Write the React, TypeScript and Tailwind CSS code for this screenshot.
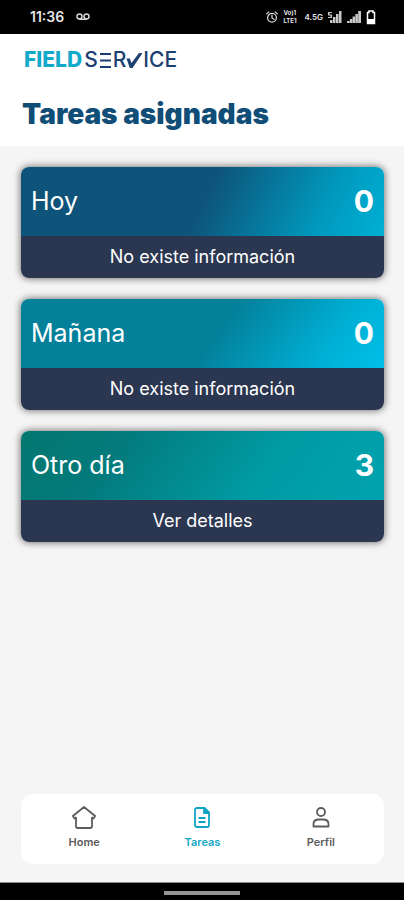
import { useState } from "react";
import type { ReactNode } from "react";
import clsx from "clsx";

interface TaskGroup {
  title: string;
  count: number;
  action: string;
  gradient: string;
}

const groups: TaskGroup[] = [
  {
    title: "Hoy",
    count: 0,
    action: "No existe información",
    gradient:
      "bg-[linear-gradient(115deg,#0e5379_0%,#0e5379_50%,#0099bd_82%,#00b0d4_100%)]",
  },
  {
    title: "Mañana",
    count: 0,
    action: "No existe información",
    gradient:
      "bg-[linear-gradient(125deg,#03819b_0%,#03819b_54%,#00aed3_82%,#00bfe8_100%)]",
  },
  {
    title: "Otro día",
    count: 3,
    action: "Ver detalles",
    gradient:
      "bg-[linear-gradient(125deg,#03776f_0%,#037a7c_26%,#009ba3_66%,#00a3b0_100%)]",
  },
];

function SignalBars({ small = false }: { small?: boolean }) {
  return (
    <svg viewBox="0 0 14 12" className="h-3 w-3.5" fill="#c8c8c8" aria-hidden="true">
      {small ? (
        <path d="M0 1h4v1H1.500v1.500H4V7H0V6h2.500V4.500H0zM2 9h2.500v3H2zM5 6h2.500v6H5zM8 3h2.500v9H8zM11 0h2.500v12H11z" />
      ) : (
        <path d="M0 10h2.500v2H0zM2.800 8h2.500v4H2.800zM5.600 5.500h2.500V12H5.600zM8.400 3h2.500v9H8.400zM11.200 0H14v12h-2.800z" />
      )}
    </svg>
  );
}

function StatusBar() {
  return (
    <div className="flex h-[34px] shrink-0 items-center justify-between bg-black pr-7 pl-[30px] text-[#e5e5e5]">
      <div className="flex items-center gap-3">
        <span className="text-sm font-semibold">11:36</span>
        <svg
          viewBox="0 0 14 8"
          className="h-2 w-3.5"
          fill="none"
          stroke="#d4d4d4"
          strokeWidth="1.5"
          aria-hidden="true"
        >
          <circle cx="3.5" cy="3.5" r="2.5" />
          <circle cx="10.5" cy="3.5" r="2.5" />
          <path d="M3 6.3h8" />
        </svg>
      </div>
      <div className="flex items-center gap-[5px]">
        <svg
          viewBox="0 0 12 12"
          className="h-3 w-3"
          fill="none"
          stroke="#d4d4d4"
          strokeWidth="1.3"
          strokeLinecap="round"
          aria-hidden="true"
        >
          <circle cx="6" cy="6.8" r="4.4" />
          <path d="M6 4.2v2.8l2 1.3M.8 2.8l2-1.9M11.2 2.8l-2-1.9" />
        </svg>
        <span className="flex w-4 flex-col text-[6px] leading-[8px] font-bold">
          <span>Vo)1</span>
          <span>LTE1</span>
        </span>
        <span className="text-[8px] font-semibold">4.5G</span>
        <SignalBars small />
        <SignalBars />
        <svg viewBox="0 0 10 15" className="h-[15px] w-2.5" aria-hidden="true">
          <path
            d="M3 2.5V1h4v1.5h1.5v11h-7v-11z"
            fill="none"
            stroke="#fff"
            strokeWidth="1.5"
          />
          <path d="M2 9h6v5H2z" fill="#fff" />
        </svg>
      </div>
    </div>
  );
}

function Logo() {
  return (
    <div
      className="flex h-5 items-center text-[21px] leading-5 font-medium text-[#1c3f72]"
      aria-label="Fieldservice"
    >
      <span className="mr-0.5 font-extrabold text-[#12a9cb]">FIELD</span>
      <span>S</span>
      <svg viewBox="0 0 13 15" className="mx-px h-[15px] w-[13px]" aria-hidden="true">
        <path d="M1 1h11M1 7.500h11M1 14h11" stroke="currentColor" strokeWidth="2" />
      </svg>
      <span>R</span>
      <svg viewBox="0 0 17 15" className="h-[15px] w-[17px]" aria-hidden="true">
        <path d="M.5 5.500h3.300l1.700 4.500L13 0h3.500L6.500 15H3.800z" fill="currentColor" />
      </svg>
      <span>ICE</span>
    </div>
  );
}

function TaskCard({ title, count, action, gradient }: TaskGroup) {
  return (
    <article className="overflow-hidden rounded-lg text-white shadow-[0_0_7px_1px_rgba(0,0,0,0.5)]">
      <div className={clsx("flex h-[69px] items-center justify-between px-2.5", gradient)}>
        <h2 className="text-[25px]">{title}</h2>
        <span className="text-[30px] font-bold">{count}</span>
      </div>
      <button
        type="button"
        className="flex h-[42px] w-full items-center justify-center bg-[#2b3650] text-lg"
      >
        {action}
      </button>
    </article>
  );
}

const tabs: { id: string; label: string; icon: ReactNode }[] = [
  {
    id: "home",
    label: "Home",
    icon: <path d="M12 1L.9 10l1.600 2.600L4 11.600V20q0 2 2 2h12q2 0 2-2v-8.400l1.500 1L23.100 10z" />,
  },
  {
    id: "tareas",
    label: "Tareas",
    icon: (
      <>
        <path d="M7 2h7.500L19 6.500V19q0 2-2 2H7q-2 0-2-2V4q0-2 2-2z" />
        <path d="M14 2v5h5z" fill="currentColor" />
        <path d="M8.500 12h7M8.500 16h7" />
      </>
    ),
  },
  {
    id: "perfil",
    label: "Perfil",
    icon: (
      <>
        <circle cx="12" cy="6" r="4" />
        <path d="M4.500 20.500v-2.500q0-4.500 5.500-4.500h4q5.500 0 5.500 4.500v2.500z" />
      </>
    ),
  },
];

function BottomNav() {
  const [active, setActive] = useState("tareas");

  return (
    <nav className="mr-5 mb-[18px] ml-[21px] flex h-[70px] rounded-xl bg-white px-1">
      {tabs.map((tab) => (
        <button
          key={tab.id}
          type="button"
          onClick={() => setActive(tab.id)}
          className={clsx(
            "flex flex-1 flex-col items-center gap-1 pt-3 text-[11px] leading-4 font-semibold",
            active === tab.id ? "text-[#12a5c3]" : "text-[#5c5c5c]"
          )}
        >
          <svg
            viewBox="0 0 24 24"
            className="h-6 w-6"
            fill="none"
            stroke="currentColor"
            strokeWidth="1.8"
            strokeLinejoin="round"
            aria-hidden="true"
          >
            {tab.icon}
          </svg>
          {tab.label}
        </button>
      ))}
    </nav>
  );
}

export default function App() {
  return (
    <div className="flex min-h-screen flex-col bg-[#f5f5f5] font-['Inter',sans-serif]">
      <StatusBar />

      <header className="bg-white px-[22px] pt-4 pb-3">
        <div className="px-0.5">
          <Logo />
        </div>
        <h1 className="mt-6 text-[28px] leading-10 font-black text-[#104d77]">
          Tareas asignadas
        </h1>
      </header>

      <main className="flex flex-1 flex-col gap-[21px] pt-[21px] pr-5 pb-6 pl-[21px]">
        {groups.map((group) => (
          <TaskCard key={group.title} {...group} />
        ))}
      </main>

      <BottomNav />

      {/* Gesture bar */}
      <div className="flex h-[18px] shrink-0 items-center justify-center border-t border-[#8a8a8a] bg-black">
        <div className="mt-0.5 h-1 w-[76px] bg-[#969696]" />
      </div>
    </div>
  );
}
